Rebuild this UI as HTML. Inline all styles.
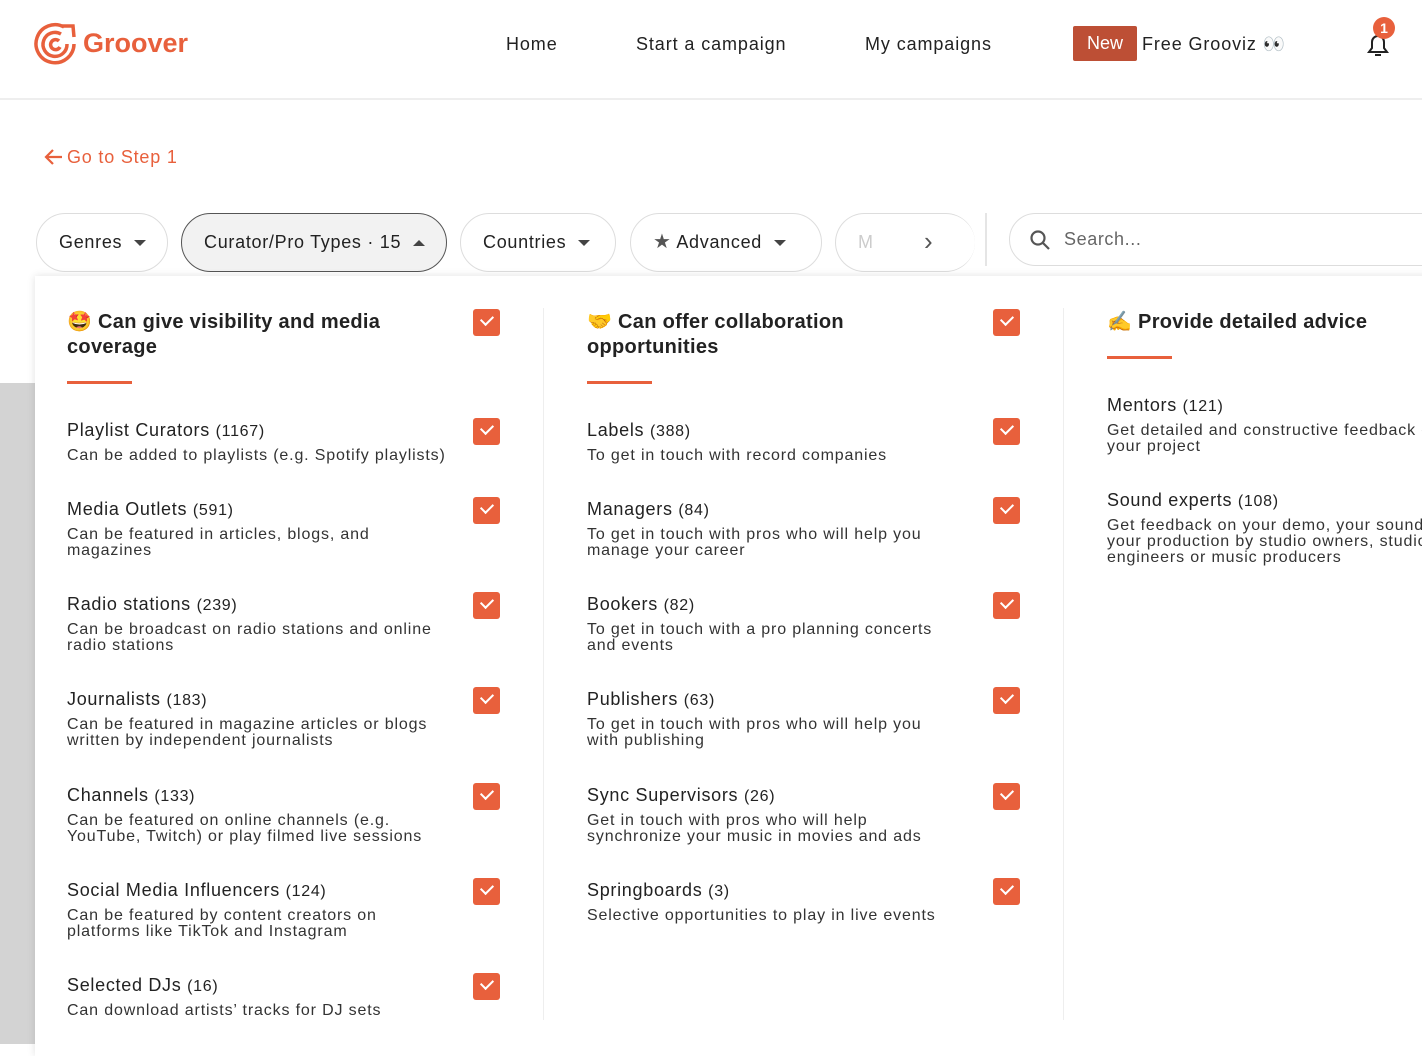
<!DOCTYPE html><html><head><meta charset="utf-8"><style>
*{margin:0;padding:0;box-sizing:border-box}
body{width:1422px;height:1044px;overflow:hidden;background:#fff;font-family:"Liberation Sans",sans-serif;color:#222;position:relative}
.a{position:absolute;white-space:nowrap}
.nav{font-size:18px;color:#222;top:33px;line-height:22px;letter-spacing:0.9px}
.chip{position:absolute;top:213px;height:59px;border:1.5px solid #ddd;border-radius:30px;background:#fff;font-size:18px;line-height:56px;color:#222;padding-left:22px;letter-spacing:0.7px}
.tri{display:inline-block;width:0;height:0;border-left:6px solid transparent;border-right:6px solid transparent;border-top:6px solid #444;vertical-align:middle;margin-left:12px}
.h{position:absolute;font-size:20px;line-height:25px;font-weight:bold;color:#222;letter-spacing:0.3px}
.ul{position:absolute;height:3px;width:65px;background:#e8603c}
.cb{position:absolute;width:27px;height:27px;background:#e8603c;border-radius:3px}
.cb:after{content:"";position:absolute;left:8px;top:6px;width:10px;height:6px;border-left:2.5px solid #fff;border-bottom:2.5px solid #fff;transform:rotate(-45deg)}
.t{position:absolute;font-size:18px;line-height:22px;white-space:nowrap;color:#222;letter-spacing:0.7px}
.t span{font-size:16px}
.d{position:absolute;font-size:16px;line-height:16px;color:#333;white-space:nowrap;letter-spacing:0.85px}
.sep{position:absolute;width:1px;background:#eee;top:308px;height:712px}
</style></head><body>
<div class="a" style="left:0;top:0;width:1422px;height:100px;border-bottom:2px solid #eee;background:#fff"></div>
<svg class="a" style="left:34px;top:22px" width="44" height="44" viewBox="0 0 44 44" fill="none" stroke="#e8603c" stroke-width="3.5"><path d="M30 5 A19 19 0 1 0 40 22"/><path d="M27 12 A12 12 0 1 0 33 22"/><path d="M25 19 A5 5 0 1 0 26 25"/><path d="M28 4 L39 4 L40 15"/></svg>
<div class="a" style="left:83px;top:28px;font-size:27px;font-weight:bold;color:#e8603c">Groover</div>
<div class="a nav" style="left:506px">Home</div>
<div class="a nav" style="left:636px">Start a campaign</div>
<div class="a nav" style="left:865px">My campaigns</div>
<div class="a" style="left:1073px;top:26px;width:64px;height:35px;background:#bd4f35;border-radius:2px;color:#fff;font-size:18px;line-height:35px;text-align:center">New</div>
<div class="a nav" style="left:1142px">Free Grooviz 👀</div>
<svg class="a" style="left:1364px;top:30px" width="28" height="28" viewBox="0 0 28 28" fill="none" stroke="#222" stroke-width="2"><path d="M5 22 H23 L20 18 V12 A6 6 0 0 0 8 12 V18 Z"/><path d="M11 25 H17"/></svg>
<div class="a" style="left:1373px;top:17px;width:22px;height:22px;border-radius:50%;background:#e8603c;color:#fff;font-size:14px;font-weight:bold;text-align:center;line-height:22px">1</div>

<div class="a" style="left:0;top:383px;width:35px;height:661px;background:#d3d3d3"></div>
<svg class="a" style="left:44px;top:148px" width="20" height="18" viewBox="0 0 20 18" fill="none" stroke="#e8603c" stroke-width="2.2"><path d="M18 9 H3 M9 2 L2 9 L9 16"/></svg>
<div class="a" style="left:67px;top:145px;font-size:18px;color:#e8603c;line-height:24px;letter-spacing:0.8px">Go to Step 1</div>

<div class="chip" style="left:36px;width:132px">Genres<span class="tri"></span></div>
<div class="chip" style="left:181px;width:266px;background:#f2f2f2;border-color:#555">Curator/Pro Types · 15<span class="tri" style="border-top:0;border-bottom:6px solid #444"></span></div>
<div class="chip" style="left:460px;width:156px">Countries<span class="tri"></span></div>
<div class="chip" style="left:630px;width:192px"><span style="color:#555;font-size:20px">★</span> Advanced<span class="tri"></span></div>
<div class="chip" style="left:835px;width:140px;border-right:none;color:#ccc">M</div>
<div class="a" style="left:924px;top:226px;font-size:26px;color:#555">›</div>
<div class="a" style="left:985px;top:213px;width:2px;height:53px;background:#e5e5e5"></div>
<div class="a" style="left:1009px;top:213px;width:440px;height:53px;border:1.5px solid #ddd;border-radius:27px"></div>
<svg class="a" style="left:1029px;top:229px" width="22" height="22" viewBox="0 0 22 22" fill="none" stroke="#555" stroke-width="2.2"><circle cx="9" cy="9" r="6.5"/><path d="M14 14 L20 20"/></svg>
<div class="a" style="left:1064px;top:229px;font-size:18px;color:#666;letter-spacing:0.6px">Search...</div>

<div class="a" style="left:35px;top:276px;width:1400px;height:780px;background:#fff;box-shadow:0 0 8px rgba(0,0,0,.12)"></div>
<div class="sep" style="left:543px"></div><div class="sep" style="left:1063px"></div>

<div class="h" style="left:67px;top:310px">🤩 Can give visibility and media<br>coverage</div><div class="ul" style="left:67px;top:381px"></div><div class="cb" style="left:473px;top:309px"></div>
<div class="h" style="left:587px;top:310px">🤝 Can offer collaboration<br>opportunities</div><div class="ul" style="left:587px;top:381px"></div><div class="cb" style="left:993px;top:309px"></div>
<div class="h" style="left:1107px;top:310px">✍️ Provide detailed advice</div><div class="ul" style="left:1107px;top:356px"></div>

<div class="t" style="left:67px;top:419px">Playlist Curators <span>(1167)</span></div><div class="d" style="left:67px;top:448px">Can be added to playlists (e.g. Spotify playlists)</div><div class="cb" style="left:473px;top:418px"></div>
<div class="t" style="left:67px;top:498px">Media Outlets <span>(591)</span></div><div class="d" style="left:67px;top:527px">Can be featured in articles, blogs, and<br>magazines</div><div class="cb" style="left:473px;top:497px"></div>
<div class="t" style="left:67px;top:593px">Radio stations <span>(239)</span></div><div class="d" style="left:67px;top:622px">Can be broadcast on radio stations and online<br>radio stations</div><div class="cb" style="left:473px;top:592px"></div>
<div class="t" style="left:67px;top:688px">Journalists <span>(183)</span></div><div class="d" style="left:67px;top:717px">Can be featured in magazine articles or blogs<br>written by independent journalists</div><div class="cb" style="left:473px;top:687px"></div>
<div class="t" style="left:67px;top:784px">Channels <span>(133)</span></div><div class="d" style="left:67px;top:813px">Can be featured on online channels (e.g.<br>YouTube, Twitch) or play filmed live sessions</div><div class="cb" style="left:473px;top:783px"></div>
<div class="t" style="left:67px;top:879px">Social Media Influencers <span>(124)</span></div><div class="d" style="left:67px;top:908px">Can be featured by content creators on<br>platforms like TikTok and Instagram</div><div class="cb" style="left:473px;top:878px"></div>
<div class="t" style="left:67px;top:974px">Selected DJs <span>(16)</span></div><div class="d" style="left:67px;top:1003px">Can download artists’ tracks for DJ sets</div><div class="cb" style="left:473px;top:973px"></div>

<div class="t" style="left:587px;top:419px">Labels <span>(388)</span></div><div class="d" style="left:587px;top:448px">To get in touch with record companies</div><div class="cb" style="left:993px;top:418px"></div>
<div class="t" style="left:587px;top:498px">Managers <span>(84)</span></div><div class="d" style="left:587px;top:527px">To get in touch with pros who will help you<br>manage your career</div><div class="cb" style="left:993px;top:497px"></div>
<div class="t" style="left:587px;top:593px">Bookers <span>(82)</span></div><div class="d" style="left:587px;top:622px">To get in touch with a pro planning concerts<br>and events</div><div class="cb" style="left:993px;top:592px"></div>
<div class="t" style="left:587px;top:688px">Publishers <span>(63)</span></div><div class="d" style="left:587px;top:717px">To get in touch with pros who will help you<br>with publishing</div><div class="cb" style="left:993px;top:687px"></div>
<div class="t" style="left:587px;top:784px">Sync Supervisors <span>(26)</span></div><div class="d" style="left:587px;top:813px">Get in touch with pros who will help<br>synchronize your music in movies and ads</div><div class="cb" style="left:993px;top:783px"></div>
<div class="t" style="left:587px;top:879px">Springboards <span>(3)</span></div><div class="d" style="left:587px;top:908px">Selective opportunities to play in live events</div><div class="cb" style="left:993px;top:878px"></div>

<div class="t" style="left:1107px;top:394px">Mentors <span>(121)</span></div><div class="d" style="left:1107px;top:423px">Get detailed and constructive feedback on<br>your project</div>
<div class="t" style="left:1107px;top:489px">Sound experts <span>(108)</span></div><div class="d" style="left:1107px;top:518px">Get feedback on your demo, your sound and<br>your production by studio owners, studio<br>engineers or music producers</div>
</body></html>
